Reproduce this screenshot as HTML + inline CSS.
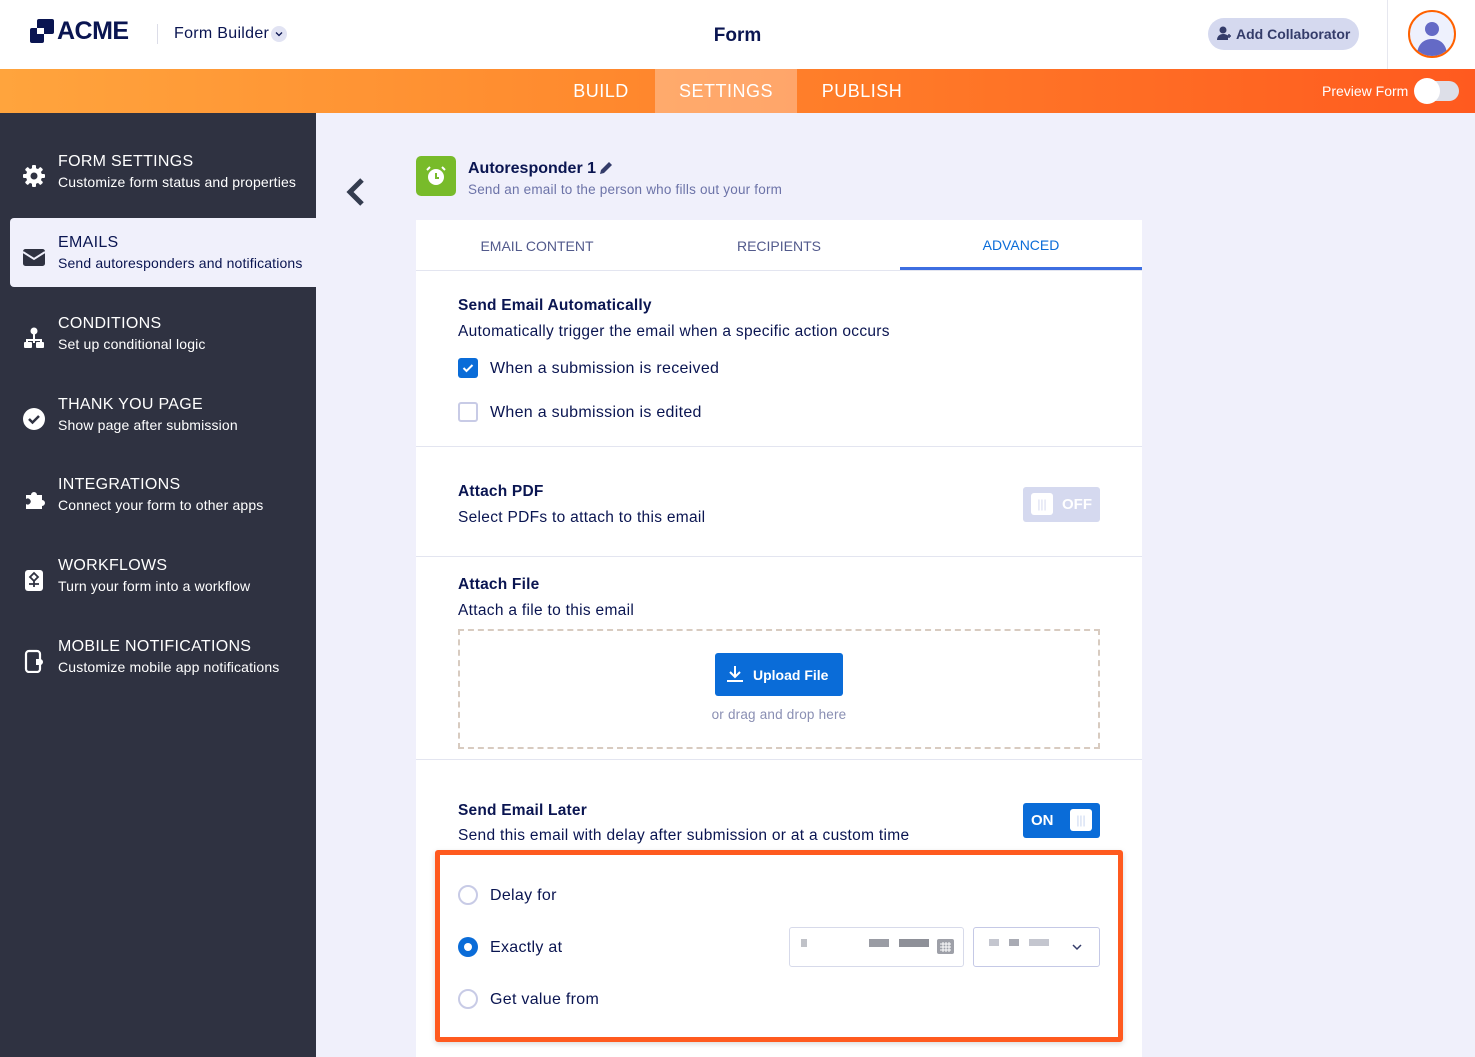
<!DOCTYPE html>
<html><head><meta charset="utf-8"><style>
*{box-sizing:border-box;margin:0;padding:0}
body{width:1475px;height:1057px;overflow:hidden;font-family:"Liberation Sans",sans-serif;background:#f0f0fb;position:relative;color:#0a1551}
.a{position:absolute}
.top{left:0;top:0;width:1475px;height:69px;background:#fff}
.bar{left:0;top:69px;width:1475px;height:44px;background:linear-gradient(90deg,#ffa43d,#ff8a2e 40%,#ff7a28 60%,#ff5a1f)}
.tab{top:69px;height:44px;color:#fff;font-size:18px;line-height:44px;text-align:center;letter-spacing:.5px}
.side{left:0;top:113px;width:316px;height:944px;background:#2f3241}
.it{left:0;width:316px;height:68px;color:#fff}
.it .t{position:absolute;left:58px;top:11px;font-size:16px;letter-spacing:.3px}
.it .s{position:absolute;left:58px;top:32px;font-size:14px;letter-spacing:.15px}
.it svg{position:absolute;left:22px;top:22px}
.card{left:416px;top:220px;width:726px;height:837px;background:#fff}
.h{font-size:15.5px;font-weight:bold;color:#0a1551;letter-spacing:.2px}
.p{font-size:15.5px;color:#0a1551;letter-spacing:.3px}
.sep{left:416px;width:726px;height:1px;background:#e3e5f0}
.cb{width:20px;height:20px;border:2px solid #c8cbe6;border-radius:3px;background:#fff}
.rd{width:20px;height:20px;border:2px solid #c8cbe6;border-radius:50%;background:#fff}
</style></head><body>
<div class="a top"></div>
<svg class="a" style="left:29px;top:18px" width="26" height="26" viewBox="0 0 26 26"><rect x="8" y="1" width="17" height="15" rx="2" fill="#0a1551"/><rect x="1" y="10" width="14" height="15" rx="2" fill="#0a1551"/><rect x="8" y="10" width="7" height="6" fill="#fff"/></svg>
<div class="a" style="left:57px;top:17px;font-size:25px;font-weight:bold;color:#0a1551;letter-spacing:-.5px">ACME</div>
<div class="a" style="left:157px;top:24px;width:1px;height:20px;background:#dcdde8"></div>
<div class="a" style="left:174px;top:25px;font-size:16px;color:#0a1551;letter-spacing:.3px">Form Builder</div>
<div class="a" style="left:271px;top:26px;width:16px;height:16px;border-radius:50%;background:#e1e3f3"></div>
<svg class="a" style="left:275px;top:31px" width="8" height="6" viewBox="0 0 8 6"><path d="M1 1.5l3 3 3-3" stroke="#0a1551" stroke-width="1.3" fill="none"/></svg>
<div class="a" style="left:0;width:1475px;top:25px;text-align:center;font-size:19px;font-weight:bold;color:#0a1551">Form</div>
<div class="a" style="left:1208px;top:18px;width:151px;height:32px;border-radius:16px;background:#d5d9ef;font-size:14px;font-weight:bold;color:#343c6a;line-height:32px;padding-left:28px">Add Collaborator</div>
<svg class="a" style="left:1217px;top:26px" width="14" height="16" viewBox="0 0 14 16"><circle cx="6" cy="4" r="3.5" fill="#343c6a"/><path d="M0 14c0-4 3-6 6-6s4 1 5 2v4z" fill="#343c6a"/><path d="M10 10h4M12 8v4" stroke="#343c6a" stroke-width="1.5"/></svg>
<div class="a" style="left:1387px;top:0;width:1px;height:69px;background:#e6e7ef"></div>
<div class="a" style="left:1408px;top:10px;width:48px;height:48px;border-radius:50%;border:2px solid #ff6100;background:#eef1fd;overflow:hidden">
<svg width="44" height="44" viewBox="0 0 44 44"><circle cx="22" cy="17" r="7" fill="#646ac6"/><path d="M7 44c0-12 7-17 15-17s15 5 15 17z" fill="#646ac6"/></svg></div>
<div class="a bar"></div>
<div class="a" style="left:655px;top:69px;width:142px;height:44px;background:rgba(255,255,255,.3)"></div>
<div class="a tab" style="left:555px;width:92px">BUILD</div>
<div class="a tab" style="left:655px;width:142px">SETTINGS</div>
<div class="a tab" style="left:810px;width:104px">PUBLISH</div>
<div class="a" style="left:1322px;top:83px;font-size:14px;color:#fff">Preview Form</div>
<div class="a" style="left:1415px;top:81px;width:44px;height:20px;border-radius:10px;background:#dddfe8"></div>
<div class="a" style="left:1414px;top:78px;width:26px;height:26px;border-radius:50%;background:#fff"></div>

<div class="a side"></div>
<div class="a it" style="top:142px"><svg width="24" height="24" viewBox="0 0 24 24"><g fill="#fff"><circle cx="12" cy="12" r="8"/><rect x="10" y="1" width="4" height="22" rx="1"/><rect x="1" y="10" width="22" height="4" rx="1"/><rect x="10" y="1" width="4" height="22" rx="1" transform="rotate(45 12 12)"/><rect x="10" y="1" width="4" height="22" rx="1" transform="rotate(-45 12 12)"/></g><circle cx="12" cy="12" r="3.5" fill="#2f3241"/></svg><div class="t">FORM SETTINGS</div><div class="s">Customize form status and properties</div></div>
<div class="a" style="left:10px;top:218px;width:306px;height:69px;background:#f0f0fb;border-radius:4px 0 0 4px"></div>
<div class="a it" style="top:223px;color:#0a1551"><svg width="24" height="24" viewBox="0 0 24 24"><rect x="1" y="4" width="22" height="17" rx="2.5" fill="#2f3241"/><path d="M1 7l11 7 11-7" stroke="#f0f0fb" stroke-width="2" fill="none"/></svg><div class="t">EMAILS</div><div class="s">Send autoresponders and notifications</div></div>
<div class="a it" style="top:304px"><svg width="24" height="24" viewBox="0 0 24 24"><circle cx="12" cy="5" r="3.5" fill="#fff"/><path d="M11 8h2v5h7v4h-2v-2h-5v2h-2v-2H6v2H4v-4h7z" fill="#fff"/><rect x="2" y="16" width="8" height="6" rx="1" fill="#fff"/><rect x="14" y="16" width="8" height="6" rx="1" fill="#fff"/></svg><div class="t">CONDITIONS</div><div class="s">Set up conditional logic</div></div>
<div class="a it" style="top:385px"><svg width="24" height="24" viewBox="0 0 24 24"><circle cx="12" cy="12" r="11" fill="#fff"/><path d="M7 12l3.5 3.5L17 9" stroke="#2f3241" stroke-width="2.5" fill="none"/></svg><div class="t">THANK YOU PAGE</div><div class="s">Show page after submission</div></div>
<div class="a it" style="top:465px"><svg width="24" height="24" viewBox="0 0 24 24"><path d="M4 8h5a3 3 0 1 1 6 0h5v5a3 3 0 1 1 0 6v3H4v-5a3 3 0 1 0 0-5z" fill="#fff"/></svg><div class="t">INTEGRATIONS</div><div class="s">Connect your form to other apps</div></div>
<div class="a it" style="top:546px"><svg width="24" height="24" viewBox="0 0 24 24"><rect x="3" y="2" width="18" height="21" rx="3" fill="#fff"/><path d="M12 5l4 4-4 4-4-4zM12 13v6M7 16h10" stroke="#2f3241" stroke-width="1.8" fill="none"/></svg><div class="t">WORKFLOWS</div><div class="s">Turn your form into a workflow</div></div>
<div class="a it" style="top:627px"><svg width="24" height="24" viewBox="0 0 24 24"><rect x="4" y="2" width="14" height="21" rx="3" stroke="#fff" stroke-width="2.2" fill="none"/><path d="M14 10h4a3 3 0 0 1 0 6h-4z" fill="#fff"/></svg><div class="t">MOBILE NOTIFICATIONS</div><div class="s">Customize mobile app notifications</div></div>

<svg class="a" style="left:343px;top:176px" width="24" height="32" viewBox="0 0 24 32"><path d="M19 4L7 16l12 12" stroke="#343c4f" stroke-width="5" fill="none"/></svg>
<div class="a" style="left:416px;top:156px;width:40px;height:40px;border-radius:5px;background:#78bb2a"></div>
<svg class="a" style="left:424px;top:164px" width="24" height="24" viewBox="0 0 24 24"><circle cx="12" cy="13" r="8" fill="#fff"/><path d="M12 9v5h3" stroke="#78bb2a" stroke-width="2" fill="none"/><path d="M3 6l3-3M21 6l-3-3" stroke="#fff" stroke-width="2"/></svg>
<div class="a" style="left:468px;top:160px;font-size:16px;font-weight:bold;color:#0a1551">Autoresponder 1</div>
<svg class="a" style="left:599px;top:161px" width="14" height="14" viewBox="0 0 14 14"><path d="M1 13l1-4 8-8 3 3-8 8z" fill="#343c6a"/></svg>
<div class="a" style="left:468px;top:182px;font-size:13.5px;color:#6c73a8;letter-spacing:.2px">Send an email to the person who fills out your form</div>

<div class="a card"></div>
<div class="a" style="left:416px;top:238px;width:242px;text-align:center;font-size:14px;color:#525a8c">EMAIL CONTENT</div>
<div class="a" style="left:658px;top:238px;width:242px;text-align:center;font-size:14px;color:#525a8c">RECIPIENTS</div>
<div class="a" style="left:900px;top:237px;width:242px;text-align:center;font-size:14px;color:#0a6cd8">ADVANCED</div>
<div class="a sep" style="top:270px"></div>
<div class="a" style="left:900px;top:267px;width:242px;height:3px;background:#3d6ee1"></div>

<div class="a h" style="left:458px;top:297px">Send Email Automatically</div>
<div class="a p" style="left:458px;top:323px">Automatically trigger the email when a specific action occurs</div>
<div class="a" style="left:458px;top:358px;width:20px;height:20px;border-radius:3px;background:#0a6cd8"></div>
<svg class="a" style="left:458px;top:358px" width="20" height="20" viewBox="0 0 20 20"><path d="M5.5 10l3 3 6-6" stroke="#fff" stroke-width="2" fill="none"/></svg>
<div class="a p" style="left:490px;top:360px;font-size:16px">When a submission is received</div>
<div class="a cb" style="left:458px;top:402px"></div>
<div class="a p" style="left:490px;top:404px;font-size:16px">When a submission is edited</div>
<div class="a sep" style="top:446px"></div>

<div class="a h" style="left:458px;top:483px">Attach PDF</div>
<div class="a p" style="left:458px;top:509px">Select PDFs to attach to this email</div>
<div class="a" style="left:1023px;top:487px;width:77px;height:35px;border-radius:3px;background:#d5d9ef"></div>
<div class="a" style="left:1031px;top:493px;width:22px;height:22px;border-radius:3px;background:#fff;font-size:12px;color:#d5d9ef;text-align:center;line-height:22px">|||</div>
<div class="a" style="left:1062px;top:496px;font-size:15px;color:#fff;font-weight:bold">OFF</div>
<div class="a sep" style="top:556px"></div>

<div class="a h" style="left:458px;top:576px">Attach File</div>
<div class="a p" style="left:458px;top:602px">Attach a file to this email</div>
<div class="a" style="left:458px;top:629px;width:642px;height:120px;border:2px dashed #d8cbc0"></div>
<div class="a" style="left:715px;top:653px;width:128px;height:43px;border-radius:3px;background:#0a6cd8;color:#fff;font-size:14px;font-weight:bold;line-height:44px;padding-left:38px">Upload File</div>
<svg class="a" style="left:726px;top:665px" width="18" height="18" viewBox="0 0 18 18"><path d="M9 1v11M4 7l5 5 5-5M1 16h16" stroke="#fff" stroke-width="2" fill="none"/></svg>
<div class="a" style="left:458px;width:642px;top:707px;text-align:center;font-size:13.5px;color:#8a8fb3;letter-spacing:.2px">or drag and drop here</div>
<div class="a sep" style="top:759px"></div>

<div class="a h" style="left:458px;top:802px">Send Email Later</div>
<div class="a p" style="left:458px;top:827px">Send this email with delay after submission or at a custom time</div>
<div class="a" style="left:1023px;top:803px;width:77px;height:35px;border-radius:3px;background:#0a6cd8"></div>
<div class="a" style="left:1031px;top:812px;font-size:15px;color:#fff;font-weight:bold">ON</div>
<div class="a" style="left:1070px;top:809px;width:22px;height:22px;border-radius:3px;background:#fff;font-size:12px;color:#c8d5f0;text-align:center;line-height:22px">|||</div>

<div class="a" style="left:435px;top:850px;width:688px;height:192px;border:5px solid #ff5a1f;border-radius:3px;box-shadow:0 2px 6px rgba(0,0,0,.15)"></div>
<div class="a rd" style="left:458px;top:885px"></div>
<div class="a p" style="left:490px;top:887px;font-size:16px">Delay for</div>
<div class="a" style="left:458px;top:937px;width:20px;height:20px;border-radius:50%;background:#0a6cd8"></div>
<div class="a" style="left:464px;top:943px;width:8px;height:8px;border-radius:50%;background:#fff"></div>
<div class="a p" style="left:490px;top:939px;font-size:16px">Exactly at</div>
<div class="a rd" style="left:458px;top:989px"></div>
<div class="a p" style="left:490px;top:991px;font-size:16px">Get value from</div>
<div class="a" style="left:789px;top:927px;width:175px;height:40px;border:1px solid #d7daea;border-radius:3px;background:#fff"></div>
<div class="a" style="left:801px;top:939px;width:6px;height:8px;background:#c0c2c8"></div>
<div class="a" style="left:869px;top:939px;width:20px;height:8px;background:#9a9ca4"></div>
<div class="a" style="left:899px;top:939px;width:30px;height:8px;background:#8e9098"></div>
<svg class="a" style="left:936px;top:936px" width="19" height="19" viewBox="0 0 19 19"><rect x="1" y="3" width="17" height="15" rx="2" fill="#9ea0a8"/><path d="M4 8h11M4 11h11M4 14h11M7 6v10M10 6v10M13 6v10" stroke="#fff" stroke-width="1"/></svg>
<div class="a" style="left:973px;top:927px;width:127px;height:40px;border:1px solid #c5c9e6;border-radius:3px;background:#fff"></div>
<div class="a" style="left:989px;top:939px;width:10px;height:7px;background:#c4c6cf"></div>
<div class="a" style="left:1009px;top:939px;width:10px;height:7px;background:#a9abb4"></div>
<div class="a" style="left:1029px;top:939px;width:20px;height:7px;background:#c4c6cf"></div>
<svg class="a" style="left:1072px;top:943px" width="10" height="8" viewBox="0 0 10 8"><path d="M1 2l4 4 4-4" stroke="#343c6a" stroke-width="1.5" fill="none"/></svg>
</body></html>
